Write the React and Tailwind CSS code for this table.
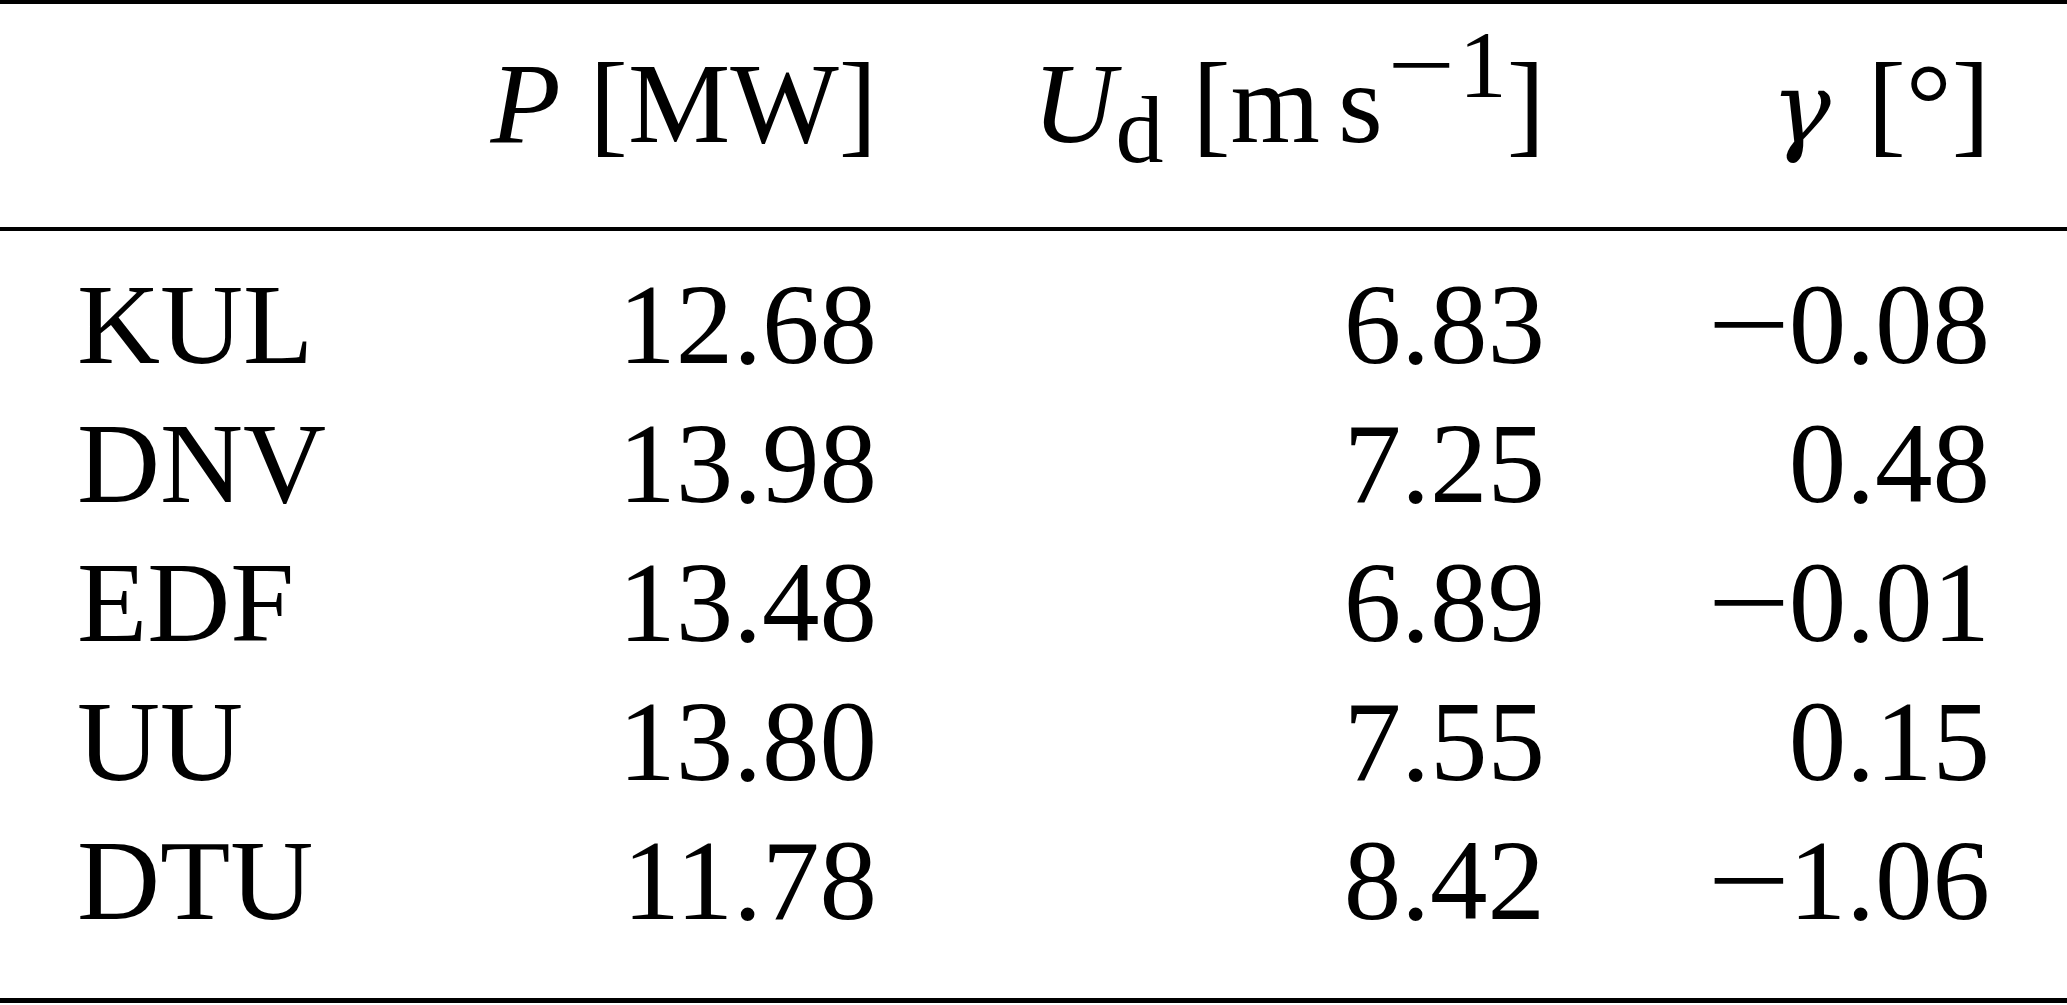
import React from 'react';

const rows = [
  ['KUL', '12.68', '6.83', '−0.08'],
  ['DNV', '13.98', '7.25', '0.48'],
  ['EDF', '13.48', '6.89', '−0.01'],
  ['UU', '13.80', '7.55', '0.15'],
  ['DTU', '11.78', '8.42', '−1.06'],
];

// minus in LaTeX is wider than the Times glyph, so stretch it a bit
const Num = ({ value }) => {
  if (value.startsWith('−')) {
    return (
      <>
        <span className="inline-block w-[80px] text-center scale-x-[1.28]">−</span>
        {value.slice(1)}
      </>
    );
  }
  return value;
};

const App = () => {
  return (
    <div className="w-[2067px] h-[1005px] bg-white text-black font-['Liberation_Serif',serif] text-[115px] leading-[139px]">
      {/* Header */}
      <div className="border-t-4 border-b-4 border-black pt-[30px] pb-[54px] px-[77px] grid grid-cols-[300px_500px_668px_445px]">
        <div></div>
        <div className="text-right whitespace-nowrap">
          <i>P</i> [MW]
        </div>
        <div className="text-right whitespace-nowrap">
          <i>U</i>
          <span className="text-[96px] leading-[0] align-[-20px]">d</span> [m
          <span className="ml-[18px]">s</span>
          <span className="inline-block text-[96px] leading-[40px] align-[45px] whitespace-nowrap">
            <span className="inline-block w-[76px] text-center scale-x-[1.25]">−</span>1
          </span>]
        </div>
        <div className="text-right whitespace-nowrap">
          <i className="font-['DejaVu_Serif',serif] text-[100px] leading-none mr-[8px]">γ</i> [°]
        </div>
      </div>

      {/* Body */}
      <div className="border-b-[5px] border-black pt-[24px] pb-[48px] px-[77px]">
        {rows.map((r) => (
          <div key={r[0]} className="grid grid-cols-[300px_500px_668px_445px] h-[139px]">
            <div className="text-left">{r[0]}</div>
            <div className="text-right">{r[1]}</div>
            <div className="text-right">{r[2]}</div>
            <div className="text-right whitespace-nowrap">
              <Num value={r[3]} />
            </div>
          </div>
        ))}
      </div>
    </div>
  );
};

export default App;
